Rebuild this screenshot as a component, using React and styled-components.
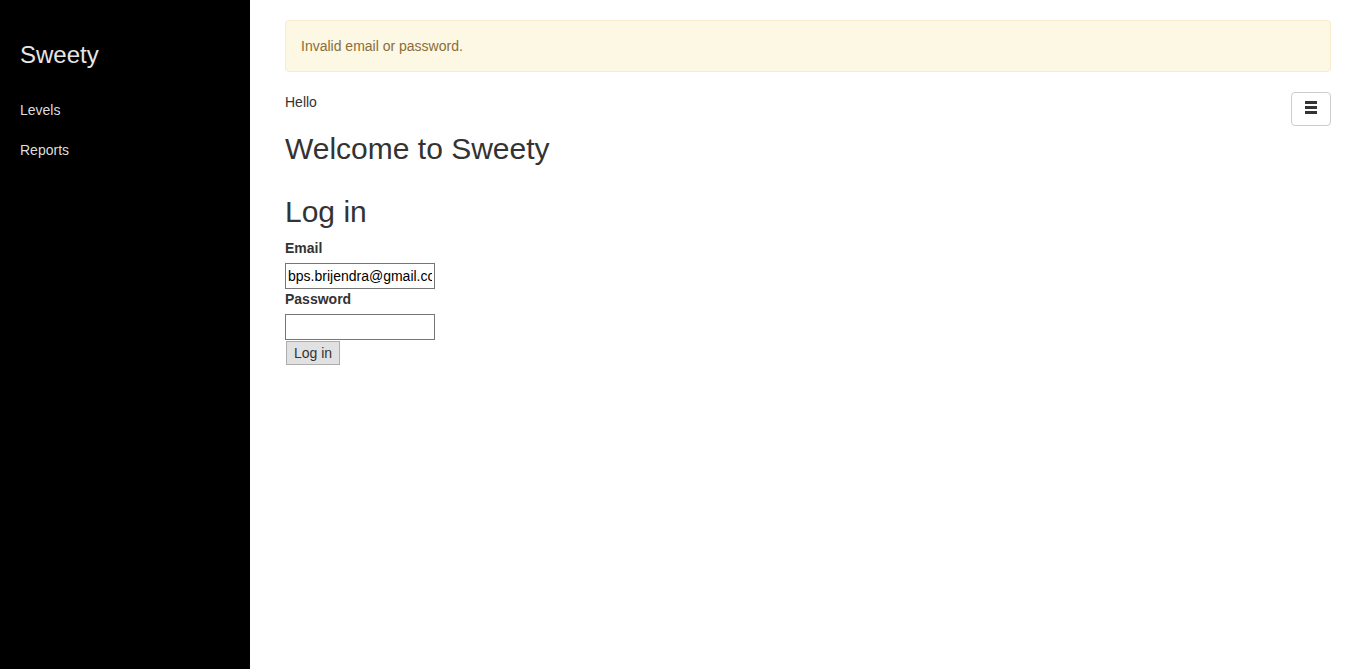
import React from "react";
import styled, { createGlobalStyle } from "styled-components";

const Global = createGlobalStyle`
  html, body { margin: 0; padding: 0; height: 100%; }
  body {
    font-family: "Liberation Sans", Arial, Helvetica, sans-serif;
    font-size: 14px;
    line-height: 20px;
    color: #333;
    background: #fff;
  }
  * { box-sizing: border-box; }
`;

const Layout = styled.div`
  display: flex;
  min-height: 669px;
`;

const Sidebar = styled.aside`
  width: 250px;
  flex-shrink: 0;
  background: #000;
  padding: 42px 20px 20px;
`;

const Brand = styled.div`
  font-size: 24px;
  line-height: 26px;
  color: #e6e6e6;
  margin-bottom: 22px;
`;

const NavLink = styled.a`
  display: block;
  padding: 10px 0;
  line-height: 20px;
  color: #ddd;
  text-decoration: none;
`;

const Main = styled.main`
  flex: 1;
  padding: 20px 35px;
`;

const Alert = styled.div`
  padding: 15px;
  margin-bottom: 20px;
  border: 1px solid #faebcc;
  border-radius: 4px;
  background: #fcf8e3;
  color: #8a6d3b;
`;

const TopRow = styled.div`
  display: flex;
  justify-content: space-between;
  align-items: flex-start;
  height: 20px;
`;

const MenuButton = styled.button`
  width: 40px;
  height: 34px;
  padding: 0;
  border: 1px solid #ccc;
  border-radius: 4px;
  background: #fff;
  display: flex;
  align-items: center;
  justify-content: center;
`;

const Heading = styled.h2`
  font-size: 30px;
  font-weight: 500;
  line-height: 33px;
  margin: ${(p) => (p.$spaced ? "30px" : "20px")} 0 10px;
  color: #333;
`;

const Label = styled.label`
  display: block;
  font-weight: bold;
  margin-bottom: 5px;
  line-height: 20px;
`;

const Input = styled.input`
  display: block;
  width: 150px;
  height: 26px;
  padding: 1px 2px;
  border: 1px solid #767676;
  font-family: "Liberation Sans", Arial, sans-serif;
  font-size: 14px;
  color: #000;
  background: #fff;
  border-radius: 0;
  outline: none;
`;

const SubmitButton = styled.button`
  display: block;
  margin: 1px 0 0 1px;
  height: 24px;
  padding: 1px 7px;
  border: 1px solid #adadad;
  background: #e1e1e1;
  font-family: "Liberation Sans", Arial, sans-serif;
  font-size: 14px;
  color: #333;
  border-radius: 0;
`;

const HamburgerIcon = () => (
  <svg width="12" height="16" viewBox="0 0 12 16">
    <rect x="0" y="0" width="12" height="3" fill="#333" />
    <rect x="0" y="5" width="12" height="3" fill="#333" />
    <rect x="0" y="10" width="12" height="3" fill="#333" />
  </svg>
);

export default function App() {
  return (
    <>
      <Global />
      <Layout>
        <Sidebar>
          <Brand>Sweety</Brand>
          <NavLink href="#">Levels</NavLink>
          <NavLink href="#">Reports</NavLink>
        </Sidebar>
        <Main>
          <Alert>Invalid email or password.</Alert>
          <TopRow>
            <span>Hello</span>
            <MenuButton aria-label="menu">
              <HamburgerIcon />
            </MenuButton>
          </TopRow>
          <Heading>Welcome to Sweety</Heading>
          <Heading $spaced>Log in</Heading>
          <form onSubmit={(e) => e.preventDefault()}>
            <Label htmlFor="email">Email</Label>
            <Input id="email" type="text" defaultValue="bps.brijendra@gmail.com" />
            <Label htmlFor="password">Password</Label>
            <Input id="password" type="password" />
            <SubmitButton type="submit">Log in</SubmitButton>
          </form>
        </Main>
      </Layout>
    </>
  );
}
